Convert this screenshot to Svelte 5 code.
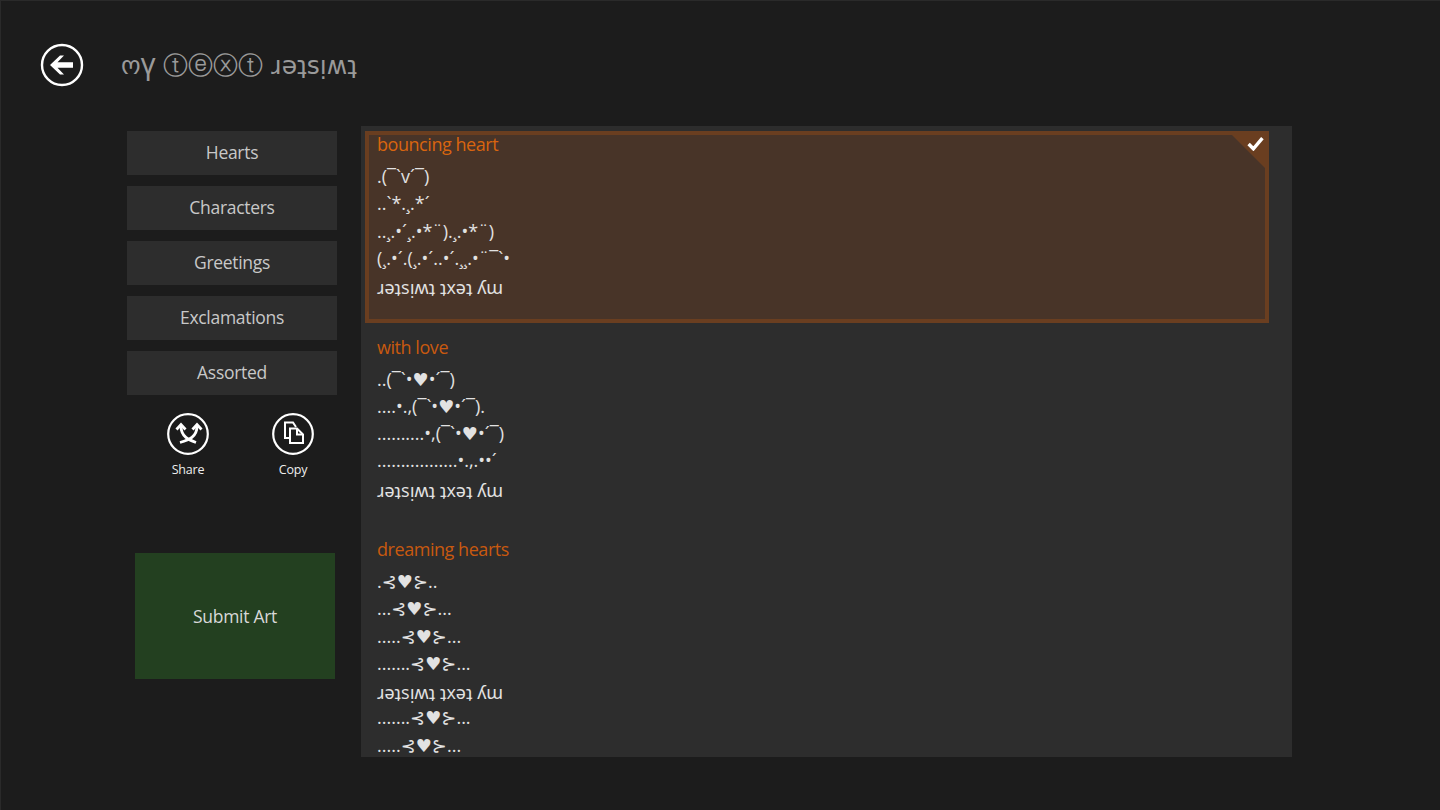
<script>
  const categories = ['Hearts', 'Characters', 'Greetings', 'Exclamations', 'Assorted'];

  const flipped = 'ɹǝʇsᴉʍʇ ʇxǝʇ ʎɯ';

  const arts = [
    {
      title: 'bouncing heart',
      selected: true,
      lines: ['.(¯`v´¯)', '..`*.¸.*´', '..¸.•´¸.•*¨).¸.•*¨)', '(¸.•´.(¸.•´..•´.¸¸.•¨¯`•', flipped]
    },
    {
      title: 'with love',
      lines: ['..(¯`•♥•´¯)', '....•.,(¯`•♥•´¯).', '..........•,(¯`•♥•´¯)', '.................•.,.••´', flipped]
    },
    {
      title: 'dreaming hearts',
      lines: ['.⊰♥⊱..', '...⊰♥⊱...', '.....⊰♥⊱...', '.......⊰♥⊱...', flipped, '.......⊰♥⊱...', '.....⊰♥⊱...']
    }
  ];
</script>

<div class="page">
  <header class="top">
    <button class="back" aria-label="Back">
      <svg viewBox="0 0 44 44" width="44" height="44">
        <circle cx="22" cy="22" r="20" fill="none" stroke="#fff" stroke-width="2.4" />
        <path d="M10 22 L20 12.5 L24 12.5 L17.5 19.2 L33 19.2 L33 24.8 L17.5 24.8 L24 31.5 L20 31.5 Z" fill="#fff" />
      </svg>
    </button>
    <h1>ო<span class="y">ү</span> ⓣⓔⓧⓣ ɹǝʇsᴉʍʇ</h1>
  </header>

  <div class="body">
    <aside class="side">
      <nav class="cats">
        {#each categories as c}
          <button class="cat">{c}</button>
        {/each}
      </nav>

      <div class="actions">
        <div class="action">
          <svg viewBox="0 0 42 42" width="42" height="42">
            <circle cx="21" cy="21" r="19.8" fill="none" stroke="#fff" stroke-width="2.2" />
            <g fill="none" stroke="#fff" stroke-width="2.8">
              <path d="M14 13 C14 24 22 27 29 29.5" />
              <path d="M30 13 C30 24 22 27 13 29.5" />
              <path d="M9.5 16.5 L14 11.5 L18.5 16.5" />
              <path d="M25.5 16.5 L30 11.5 L34.5 16.5" />
            </g>
          </svg>
          <span>Share</span>
        </div>
        <div class="action">
          <svg viewBox="0 0 42 42" width="42" height="42">
            <circle cx="21" cy="21" r="19.8" fill="none" stroke="#fff" stroke-width="2.2" />
            <g fill="none" stroke="#fff" stroke-width="2" stroke-linejoin="miter">
              <path d="M18 25 H13 V9.5 H21 L24 14" />
              <path d="M18 15.5 H25 L31 21.5 V30 H18 Z" />
              <path d="M25 15.5 V21.5 H31" />
            </g>
          </svg>
          <span>Copy</span>
        </div>
      </div>

      <button class="submit">Submit Art</button>
    </aside>

    <main class="panel">
      {#each arts as a}
        <section class="art" class:selected={a.selected}>
          <h2>{a.title}</h2>
          {#each a.lines as l}
            <div class="line" class:flip={l === flipped}>{l}</div>
          {/each}
          {#if a.selected}
            <span class="corner"></span>
            <svg class="check" viewBox="0 0 16 14" width="17" height="15">
              <path d="M1.5 7.5 L6 12 L14.5 2" fill="none" stroke="#fff" stroke-width="3.2" />
            </svg>
          {/if}
        </section>
      {/each}
    </main>
  </div>
</div>

<style>
  :global(body) {
    margin: 0;
    background: #1c1c1c;
  }

  .page {
    height: 810px;
    box-sizing: border-box;
    overflow: hidden;
    color: #e6e6e6;
    font-family: "Open Sans", "Noto Sans", "DejaVu Sans", sans-serif;
    background: #1c1c1c;
    border-left: 1px solid #2a2a2a;
    border-top: 1px solid #2a2a2a;
  }

  button {
    font-family: inherit;
    border: 0;
    padding: 0;
    color: inherit;
  }

  .top {
    display: flex;
    align-items: center;
    height: 125px;
    padding: 2px 0 0 39px;
    box-sizing: border-box;
  }

  .back {
    background: none;
    width: 44px;
    height: 44px;
    margin-right: 37px;
  }

  .back svg {
    display: block;
  }

  h1 {
    margin: 0;
    font-size: 25px;
    font-weight: 400;
    color: #9a9a9a;
    font-family: "DejaVu Sans", sans-serif;
  }

  .y {
    font-family: "Noto Sans", sans-serif;
    font-size: 29px;
    line-height: 1;
  }

  .body {
    display: flex;
    align-items: flex-start;
  }

  .side {
    width: 210px;
    margin-left: 126px;
    margin-right: 24px;
    padding-top: 5px;
  }

  .cats {
    display: flex;
    flex-direction: column;
    gap: 11px;
  }

  .cat {
    height: 44px;
    padding-bottom: 2px;
    background: #2d2d2d;
    font-size: 17.5px;
    letter-spacing: -0.3px;
    color: #c8c8c8;
  }

  .actions {
    display: flex;
    gap: 63px;
    padding: 18px 0 0 40px;
  }

  .action {
    display: flex;
    flex-direction: column;
    align-items: center;
    gap: 6px;
    font-size: 12.5px;
    letter-spacing: -0.2px;
    color: #eee;
    width: 42px;
  }

  .submit {
    display: block;
    width: 200px;
    height: 126px;
    margin: 75px 0 0 8px;
    background: #234020;
    font-size: 17.5px;
    letter-spacing: -0.3px;
    color: #d8d8d8;
  }

  .panel {
    width: 931px;
    height: 631px;
    background: #2d2d2d;
    padding: 5px 0 0 4px;
    box-sizing: border-box;
  }

  .art {
    position: relative;
    width: 904px;
    min-height: 192px;
    box-sizing: border-box;
    padding: 0 0 0 8px;
    margin-bottom: 10.5px;
    border: 4px solid transparent;
  }

  .art.selected {
    background: #483428;
    border-color: #6a3e20;
  }

  h2 {
    margin: -4px 0 6px;
    font-size: 18px;
    letter-spacing: -0.45px;
    font-weight: 400;
    line-height: 26px;
    color: #c8590f;
  }

  .selected h2 {
    color: #d9650f;
  }

  .line {
    font-size: 18px;
    line-height: 27.3px;
    height: 27.3px;
    color: #e2e2e2;
    white-space: pre;
  }

  .line.flip {
    line-height: 31px;
  }

  .corner {
    position: absolute;
    top: 0;
    right: 0;
    width: 0;
    height: 0;
    border-top: 33px solid #6a3e20;
    border-left: 33px solid transparent;
  }

  .check {
    position: absolute;
    top: 1px;
    right: 1px;
  }
</style>
